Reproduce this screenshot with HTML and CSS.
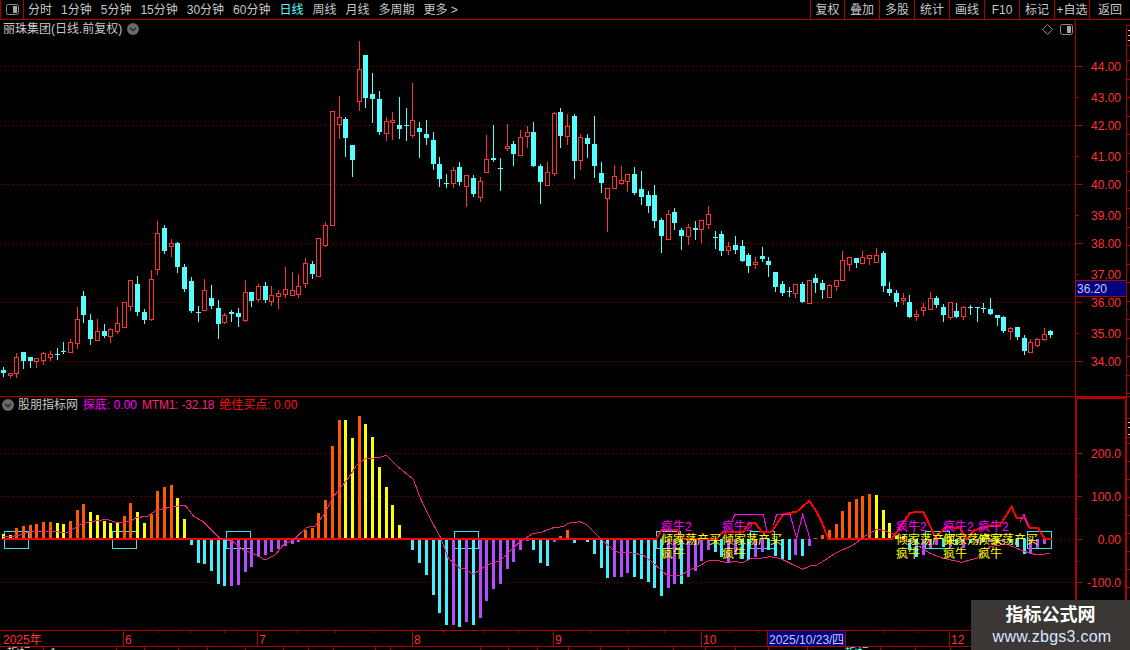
FILE: index.html
```html
<!DOCTYPE html>
<html lang="zh-CN">
<head>
<meta charset="utf-8">
<title>丽珠集团 日线</title>
<link rel="stylesheet" href="styles.css">
</head>
<body>
<div class="screen">
  <header class="toolbar">
    <div class="layout-cell">
      <svg class="icon-layout" viewBox="0 0 13 11"><rect x="0.5" y="0.5" width="12" height="10" rx="2" class="icon-frame"/><rect x="7" y="2" width="4" height="7" class="icon-fill"/></svg>
    </div>
    <nav class="periods">
      <span>分时</span><span>1分钟</span><span>5分钟</span><span>15分钟</span><span>30分钟</span><span>60分钟</span><span class="active">日线</span><span>周线</span><span>月线</span><span>多周期</span><span>更多 &gt;</span>
    </nav>
    <nav class="actions">
      <span>复权</span><span>叠加</span><span>多股</span><span>统计</span><span>画线</span><span>F10</span><span>标记</span><span>+自选</span><span>返回</span>
    </nav>
  </header>

  <section class="panel panel-price">
    <div class="caption">
      <span>丽珠集团(日线.前复权)</span>
      <svg class="icon-circle" viewBox="0 0 12 12"><circle cx="6" cy="6" r="6" class="circle-bg"/><path d="M3.2 4.8 6 7.6 8.8 4.8" class="circle-arrow"/></svg>
    </div>
    <div class="corner-icons">
      <svg class="icon-diamond" viewBox="0 0 11 11"><path d="M5.5 0.5 10.5 5.5 5.5 10.5 0.5 5.5Z" class="icon-frame"/></svg>
      <svg class="icon-layout" viewBox="0 0 13 11"><rect x="0.5" y="0.5" width="12" height="10" rx="2" class="icon-frame"/><rect x="7" y="2" width="4" height="7" class="icon-fill"/></svg>
    </div>
    <svg id="price" class="chart" viewBox="0 20 1130 376"></svg>
  </section>

  <section class="panel panel-indicator">
    <div class="legend">
      <svg class="icon-circle" viewBox="0 0 12 12"><circle cx="6" cy="6" r="6" class="circle-bg"/><path d="M3.2 4.8 6 7.6 8.8 4.8" class="circle-arrow"/></svg>
      <span class="legend-name">股朋指标网</span>
      <span class="legend-magenta">探底: 0.00</span>
      <span class="legend-pink">MTM1: -32.18</span>
      <span class="legend-red">绝佳买点: 0.00</span>
    </div>
    <svg id="indicator" class="chart" viewBox="0 397 1130 233"></svg>
  </section>

  <section class="panel panel-time"><svg id="timeline" class="chart" viewBox="0 630 1130 17"></svg></section>
  <section class="panel panel-strip"><svg id="strip" class="chart" viewBox="0 647 1130 3"></svg></section>

  <aside class="watermark">
    <strong>指标公式网</strong>
    <span>www.zbgs3.com</span>
  </aside>
</div>
<script src="chart.js"></script>
</body>
</html>
```
FILE: styles.css
```css
* { box-sizing: border-box; }
html, body { margin: 0; padding: 0; background: #000; }
body { width: 1130px; height: 650px; overflow: hidden; font-family: "Liberation Sans", "Noto Sans CJK SC", sans-serif; font-size: 12px; line-height: 14px; color: #c8c8c8; }
.screen { position: relative; width: 1130px; height: 650px; display: flex; flex-direction: column; background: #000; }

.toolbar { height: 20px; flex: none; display: flex; align-items: stretch; border-bottom: 1px solid #b00000; }
.layout-cell { width: 24px; display: flex; align-items: center; justify-content: center; border-left: 1px solid #b00000; border-right: 1px solid #b00000; }
.periods { display: flex; align-items: center; gap: 9px; padding-left: 4px; white-space: nowrap; }
.periods .active { color: #54ffff; }
.actions { margin-left: auto; width: 320px; display: grid; grid-template-columns: 34px repeat(7, 35px) 41px; }
.actions span { border-left: 1px solid #b00000; display: flex; align-items: center; justify-content: center; white-space: nowrap; }

.icon-layout { width: 13px; height: 11px; display: block; }
.icon-frame { fill: none; stroke: #8c8c8c; stroke-width: 1; }
.icon-fill { fill: #a8a8a8; }
.icon-circle { width: 12px; height: 12px; display: block; flex: none; }
.circle-bg { fill: #686868; }
.circle-arrow { fill: none; stroke: #1c1c1c; stroke-width: 1.2; }
.icon-diamond { width: 11px; height: 11px; display: block; }

.panel { position: relative; flex: none; }
.panel-price { height: 377px; border-bottom: 1px solid #b00000; }
.panel-indicator { height: 233px; }
.panel-time { height: 17px; }
.panel-strip { height: 3px; overflow: hidden; }
.chart { display: block; width: 100%; height: 100%; }
.panel-price .chart { height: 376px; }

.caption { position: absolute; left: 3px; top: 2px; display: flex; align-items: center; gap: 5px; }
.corner-icons { position: absolute; left: 1042px; top: 4px; display: flex; align-items: center; gap: 7px; }
.legend { position: absolute; left: 2px; top: 1px; display: flex; align-items: center; gap: 5px; white-space: nowrap; }
.legend-name { margin-left: -1px; }
.legend-magenta { color: #ff00ff; }
.legend-pink { color: #ff2080; letter-spacing: -0.2px; }
.legend-red { color: #ff1010; }

.watermark { position: absolute; left: 971px; top: 600px; width: 159px; height: 50px; background: #3b3735; display: flex; flex-direction: column; align-items: center; padding-top: 4px; }
.watermark strong { font-size: 18px; line-height: 23px; color: #fff; font-weight: 700; }
.watermark span { font-size: 16px; line-height: 20px; color: #d8e8ff; margin-left: 3px; letter-spacing: 0.25px; }

.axis-text { font-family: "Liberation Sans", "Noto Sans CJK SC", sans-serif; font-size: 12px; fill: #ff3232; }
.time-text { font-family: "Liberation Sans", "Noto Sans CJK SC", sans-serif; font-size: 12px; fill: #ff3232; }
.quote-text { font-family: "Liberation Sans", sans-serif; font-size: 12px; fill: #c8c8f0; }
.sig-magenta { font-family: "Liberation Sans", "Noto Sans CJK SC", sans-serif; font-size: 12px; fill: #ff00ff; }
.sig-yellow { font-family: "Liberation Sans", "Noto Sans CJK SC", sans-serif; font-size: 12px; fill: #ffff00; }
.strip-text { font-family: "Liberation Sans", "Noto Sans CJK SC", sans-serif; font-size: 12px; fill: #c8c8c8; }
.strip-cyan { font-family: "Liberation Sans", "Noto Sans CJK SC", sans-serif; font-size: 12px; fill: #54ffff; }
```
FILE: chart.js
```js
var RED = "#b00000", STEP = 6.716;
function cx(i) { return 3.3 + STEP * i; }
function rect(x, y, w, h, fill) { return '<rect x="' + x + '" y="' + y + '" width="' + w + '" height="' + h + '" fill="' + fill + '"/>'; }
function dots(y) { var s = '<g fill="#a00000">'; for (var x = 1; x < 1075; x += 4) s += '<rect x="' + x + '" y="' + y + '" width="1" height="1"/>'; return s + '</g>'; }
function poly(pts, c, w) { return '<polyline fill="none" stroke="' + c + '" stroke-width="' + w + '" points="' + pts.map(function (p) { return p[0].toFixed(1) + ',' + p[1].toFixed(1); }).join(' ') + '"/>'; }
function text(x, y, s, cls, anchor) { return '<text x="' + x + '" y="' + y + '" class="' + cls + '"' + (anchor ? ' text-anchor="' + anchor + '"' : '') + '>' + s + '</text>'; }
function zoom(list, bx, by) { return list.map(function (p) { return [bx + p[0] / 3, by + p[1] / 3]; }); }

/* ---------- candles: colour, high, body top, body bottom, low ---------- */
var groups = [
 [200, "c502,510,520,528 r518,520,526,531 r460,472,518,531 c456,456,483,503 c471,471,483,501 r475,475,484,501 r457,460,479,492 r454,463,470,480 c445,462,465,477 c427,453,456,459 r418,427,455,455 r321,358,428,444 c273,288,345,366 c342,360,417,432 r357,394,419,419 c372,393,408,411 r384,388,407,426 r321,370,392,399 r307,307,380,380 r241,241,317,330 c228,252,335,345 c327,336,360,369 r210,238,356,360 r63,100,206,222 c75,84,153,159 r118,130,137,168 c126,129,201,216 c193,201,267,273 c231,243,333,336 c318,336,339,363 r237,271,329,329 c255,294,318,324 c300,324,372,414 r339,346,366,369 c330,336,342,363 c324,339,351,378 r240,277,359,363 c276,276,303,318 r252,259,296,303 c246,258,300,306 r258,286,302,315 r270,278,287,324 r201,268,281,291 r216,271,284,285 r222,259,281,291 r174,190,250,261 c183,192,222,234 r114,115,227,228 r67,76,134,138"],
 [30, "r244,244,584,584 r198,262,281,324 c262,267,324,378 c345,345,390,438 r33,118,212,240 c75,75,204,231 c129,192,207,276 c183,207,306,312 r262,274,308,330 r247,270,276,327 c201,285,297,324 c234,285,288,330 r159,271,315,321 c276,294,306,381 c270,312,324,342 c306,330,402,417 c381,402,447,468 c432,459,462,471 r411,421,458,471 c396,411,456,465 r436,436,467,528 c435,444,492,498 r441,454,500,513 r315,388,425,425 c285,384,390,393 c384,414,417,480 r282,348,354,360 c333,342,372,405 r300,322,374,375 r288,307,319,351 c276,306,408,408 c402,408,456,519 r396,427,464,465 r246,250,430,435 c234,246,318,351 r252,289,317,342 c252,258,393,444 r312,322,391,417 c312,324,342,381 c258,342,408,441 c396,429,459,486 r475,475,503,603 r405,439,473,474 r408,451,460,463 r433,433,452,484 c411,432,489,492 c423,477,501,522 c483,495,528,546 c465,495,573,591"],
 [150, "c205,210,258,306 r180,192,267,267 c174,186,219,237 c234,240,258,297 r222,232,258,282 c213,234,240,267 r211,211,236,276 r168,193,221,234 c243,261,264,294 c243,252,303,315 r276,289,300,312 c258,285,300,309 c270,288,333,333 c309,315,348,366 r321,336,342,354 c291,318,327,333 c321,333,345,378 c366,366,411,423 c393,402,429,435 c411,423,426,438 r402,403,429,441 c396,402,456,456 r391,391,459,459 c372,384,399,426 c390,399,420,444 r402,405,441,441 r390,391,408,420 r303,331,389,390 r322,322,341,360 c324,324,339,351 r303,322,338,339 r316,316,323,342 r294,316,335,336"],
 [230, "c63,69,168,183 c156,177,189,195 c180,189,216,228 r189,204,210,222 c195,216,261,261 r240,252,258,270 r219,232,240,255 r186,205,236,237 c198,204,225,231 c222,231,255,273 r216,217,261,267 c219,243,261,261 r228,232,258,267 c225,231,234,252 c231,231,234,273 c219,234,237,246 c204,237,252,252 c255,255,264,285 c258,261,303,306 r291,295,302,327 c291,291,321,327 c315,324,363,372 r327,337,366,366 r324,328,345,348 r294,313,327,330 c300,303,315,321"]
];

function buildPrice() {
  var o = '<g shape-rendering="crispEdges">';
  [66, 125, 184, 243, 302, 361].forEach(function (y) { o += dots(y); });
  var i = 0;
  groups.forEach(function (g) {
    g[1].split(" ").forEach(function (s) {
      var red = s[0] === "r", v = s.slice(1).split(",").map(function (n) { return Math.round(g[0] + n / 3); });
      var X = Math.round(cx(i) - 0.5), col = red ? "#ff3232" : "#54ffff";
      o += rect(X, v[0], 1, v[3] - v[0] + 1, col);
      if (red) {
        var h = Math.max(v[2] - v[1], 2);
        o += '<rect x="' + (X - 1.5) + '" y="' + (v[1] + 0.5) + '" width="4" height="' + h + '" fill="#000" stroke="' + col + '"/>';
      } else {
        o += rect(X - 2, v[1], 5, Math.max(v[2] - v[1], 1), col);
      }
      i++;
    });
  });
  /* axis */
  o += rect(1075, 20, 1, 376, RED) + rect(1126, 25, 1, 371, RED);
  [[66, 1], [97, 0], [125, 1], [156, 0], [184, 1], [215, 0], [243, 1], [274, 0], [302, 1], [333, 0], [361, 1]].forEach(function (t) {
    o += rect(1076, t[0], t[1] ? 6 : 3, 1, RED);
  });
  for (var y = 60; y < 396; y += 18.5) o += rect(1127, Math.round(y), 3, 1, RED);
  o += rect(1127, 25, 3, 1, RED) + rect(1127, 45, 3, 1, RED);
  [30, 35, 40].forEach(function (y) { o += rect(1128, y, 2, 1, "#c8c8c8"); });
  o += rect(1076, 280, 50, 17, "#000080") + rect(1076, 280, 50, 1, RED) + rect(1076, 296, 50, 1, RED);
  o += '</g>';
  [["44.00", 71], ["43.00", 102], ["42.00", 130], ["41.00", 161], ["40.00", 189], ["39.00", 220], ["38.00", 248], ["37.00", 279], ["36.00", 307], ["35.00", 338], ["34.00", 366]].forEach(function (t) {
    o += text(1091, t[1], t[0], "axis-text");
  });
  o += text(1077, 293, "36.20", "quote-text");
  document.getElementById("price").innerHTML = o;
}

/* ---------- indicator ---------- */
var barsA = "y432 y435 o414 o408 o405 o402 o396 o396 y399 y402 o393 o360 o342 y366 y375 y393 y399 y399 o378 o339 y366 y399 o372 o303 o291 o285 y324 y387 c465 c519 c522 c543 c582 c588 p588 p585 p546 p531 p501 p495 p486 p477 p468 p462 p456 o420 o414 o369 o330 o168 o90 y90 y144 o78 y102 y141 y231 y291 y345 y405 c450 c480 c519 c555 c615 c669 c705 p705 c711 p696 c705 p684 p633 p597 p582 p537 p516 p480 p453 c480 c519 c528 p456 o438 o420 c459 p450 c456 c492 c534 c564 p561 p561 p549 c561 c567 c576 c594 c618 p594 p582 c582 p561 p543 p513 p480 c486 c500 p520 p495 c507 c510 p501";
var barsB = "p215 c210 c228 c240 c240 p225 c228 p198 o174 o165 o150 o132 o93 o66 o57 o48 o42 y45 y90 y129 y165 y168 c210 c230 p225 p205 p195 c200 p200 c195 p205 c190 p190 c185 p185 c190 p185 c190 c200 c222 p218 p205 p192";
var COLORS = { o: "#ff5a00", y: "#ffff00", c: "#40f0ff", p: "#b44cff" };
var ZERO = 539;

function buildIndicator() {
  var o = '<g shape-rendering="crispEdges">';
  [453, 496, 539, 582].forEach(function (y) { o += dots(y); });
  [4, 112, 226, 454, 656, 750, 925, 1027].forEach(function (x) {
    o += '<rect x="' + (x + 0.5) + '" y="531.5" width="24" height="17" fill="none" stroke="#30e8e8"/>';
  });
  var i = 0;
  function bar(col, y) {
    var X = Math.round(cx(i) - 1.5), top = Math.min(y, ZERO), h = Math.abs(y - ZERO);
    o += rect(X, Math.round(top), 3, Math.max(Math.round(h), 1), COLORS[col]);
    i++;
  }
  barsA.split(" ").forEach(function (s) { bar(s[0], 390 + s.slice(1) / 3); });
  barsB.split(" ").forEach(function (s) { bar(s[0], 480 + s.slice(1) / 3); });

  /* pink moving average */
  var pink = zoom([[10, 440], [30, 440], [60, 435], [90, 425], [150, 424], [200, 428], [240, 405], [270, 395], [320, 388], [350, 398], [390, 395], [410, 382], [440, 380], [470, 360], [510, 352], [555, 345], [580, 378], [610, 395], [630, 415], [660, 445], [700, 455], [730, 480], [770, 495], [795, 510], [825, 495], [850, 465], [880, 450], [920, 412], [945, 408], [975, 370], [1000, 320], [1045, 265], [1070, 225], [1095, 207], [1140, 202]], 0, 390)
    .concat(zoom([[18, 196], [45, 223], [100, 268], [120, 322], [150, 385], [183, 445], [205, 505], [240, 535], [255, 537], [280, 553], [320, 525], [360, 512], [420, 455], [460, 430], [480, 428], [520, 413], [550, 410], [565, 400], [600, 395], [620, 405], [660, 445], [700, 480], [720, 488], [750, 488], [790, 495], [815, 515], [860, 555], [905, 556], [925, 540], [945, 535], [985, 512], [1015, 512], [1040, 518], [1060, 515], [1090, 517], [1115, 505], [1140, 505]], 380, 390))
    .concat(zoom([[390, 230], [420, 235], [450, 250], [488, 268], [510, 258], [530, 255], [555, 240], [585, 220], [640, 195]], 640, 480))
    .concat(zoom([[20, 165], [50, 148], [75, 152], [105, 165], [150, 190], [180, 200], [210, 220], [250, 235], [305, 247], [350, 235], [390, 200], [440, 192], [470, 205], [510, 220], [535, 225], [570, 220]], 860, 480));

  /* thick red signal line */
  var thick = [[3, 539]]
    .concat(zoom([[48, 177], [65, 150], [110, 150], [130, 177], [230, 177], [250, 155], [310, 155], [330, 128], [345, 128], [365, 155], [395, 155], [430, 103], [470, 95], [508, 62], [530, 95], [545, 125], [565, 177], [660, 177]], 640, 480))
    .concat(zoom([[95, 178], [150, 98], [190, 95], [225, 170], [240, 160], [260, 140], [300, 145], [320, 178], [345, 150], [380, 140], [420, 135], [455, 80], [470, 115], [495, 115], [510, 145], [535, 145], [555, 177], [575, 177]], 860, 480));

  o += poly(thick, "#ff0000", 2);
  o += poly(zoom([[275, 125], [285, 103], [370, 103], [380, 152]], 640, 480), "#ff00ff", 1);
  o += poly(zoom([[400, 135], [410, 103], [450, 103], [470, 175], [488, 103], [510, 177]], 640, 480), "#ff00ff", 1);
  o += poly(zoom([[480, 125], [492, 103], [505, 140]], 860, 480), "#ff00ff", 1);
  o += poly(pink, "#f0208a", 1);

  /* axis */
  o += rect(1075, 397, 2, 233, RED) + rect(1075, 397, 52, 2, RED) + rect(1125, 397, 2, 233, RED);
  [453, 496, 539, 582].forEach(function (y) { o += rect(1077, y, 5, 1, RED); });
  [475, 518, 561].forEach(function (y) { o += rect(1077, y, 2, 1, RED); });
  for (var k = 0; k < 9; k++) o += rect(1127, 443 + k * 18, 3, 1, RED);
  o += rect(1127, 418, 3, 1, RED) + rect(1127, 437, 3, 1, RED);
  [422, 427, 434].forEach(function (y) { o += rect(1128, y, 2, 1, "#c8c8c8"); });
  o += '</g>';

  [[661], [722], [896], [943], [978]].forEach(function (p) {
    o += text(p[0], 531, "疯牛2", "sig-magenta");
    o += text(p[0], 544, "倾家荡产买", "sig-yellow");
    o += text(p[0], 558, "疯牛", "sig-yellow");
  });
  [["200.0", 458], ["100.0", 501], ["0.00", 544], ["-100.0", 587]].forEach(function (t) {
    o += text(1121, t[1], t[0], "axis-text", "end");
  });
  document.getElementById("indicator").innerHTML = o;
}

/* ---------- time axis ---------- */
function buildTime() {
  var o = '<g shape-rendering="crispEdges">' + rect(0, 630, 1130, 1, RED) + rect(0, 646, 1130, 1, RED);
  [123, 257, 412, 553, 701, 949].forEach(function (x) { o += rect(x, 630, 1, 16, RED); });
  [157, 190, 224, 297, 335, 373, 443, 483, 518, 590, 627, 664, 730, 758, 883, 917].forEach(function (x) { o += rect(x, 631, 1, 2, RED); });
  o += rect(768, 631, 77, 15, "#000080") + rect(767, 630, 1, 16, RED) + rect(845, 630, 1, 16, RED);
  o += '</g>';
  [[3, "2025年"], [125, "6"], [259, "7"], [414, "8"], [555, "9"], [703, "10"], [951, "12"]].forEach(function (t) {
    o += text(t[0], 644, t[1], "time-text");
  });
  o += text(769, 644, "2025/10/23/四", "quote-text");
  document.getElementById("timeline").innerHTML = o;
}

function buildStrip() {
  var o = text(7, 657, "指标", "strip-text") + text(50, 657, "1", "strip-text") + text(845, 657, "指标", "strip-cyan");
  o += '<g shape-rendering="crispEdges">';
  [43, 116, 144, 178, 207, 245, 283, 308, 333, 375, 390, 480, 508, 537, 568, 600, 628, 673, 705, 735, 768, 807, 845, 880, 915, 950].forEach(function (x) { o += rect(x, 647, 1, 3, RED); });
  o += '</g>';
  document.getElementById("strip").innerHTML = o;
}

buildPrice();
buildIndicator();
buildTime();
buildStrip();
```
